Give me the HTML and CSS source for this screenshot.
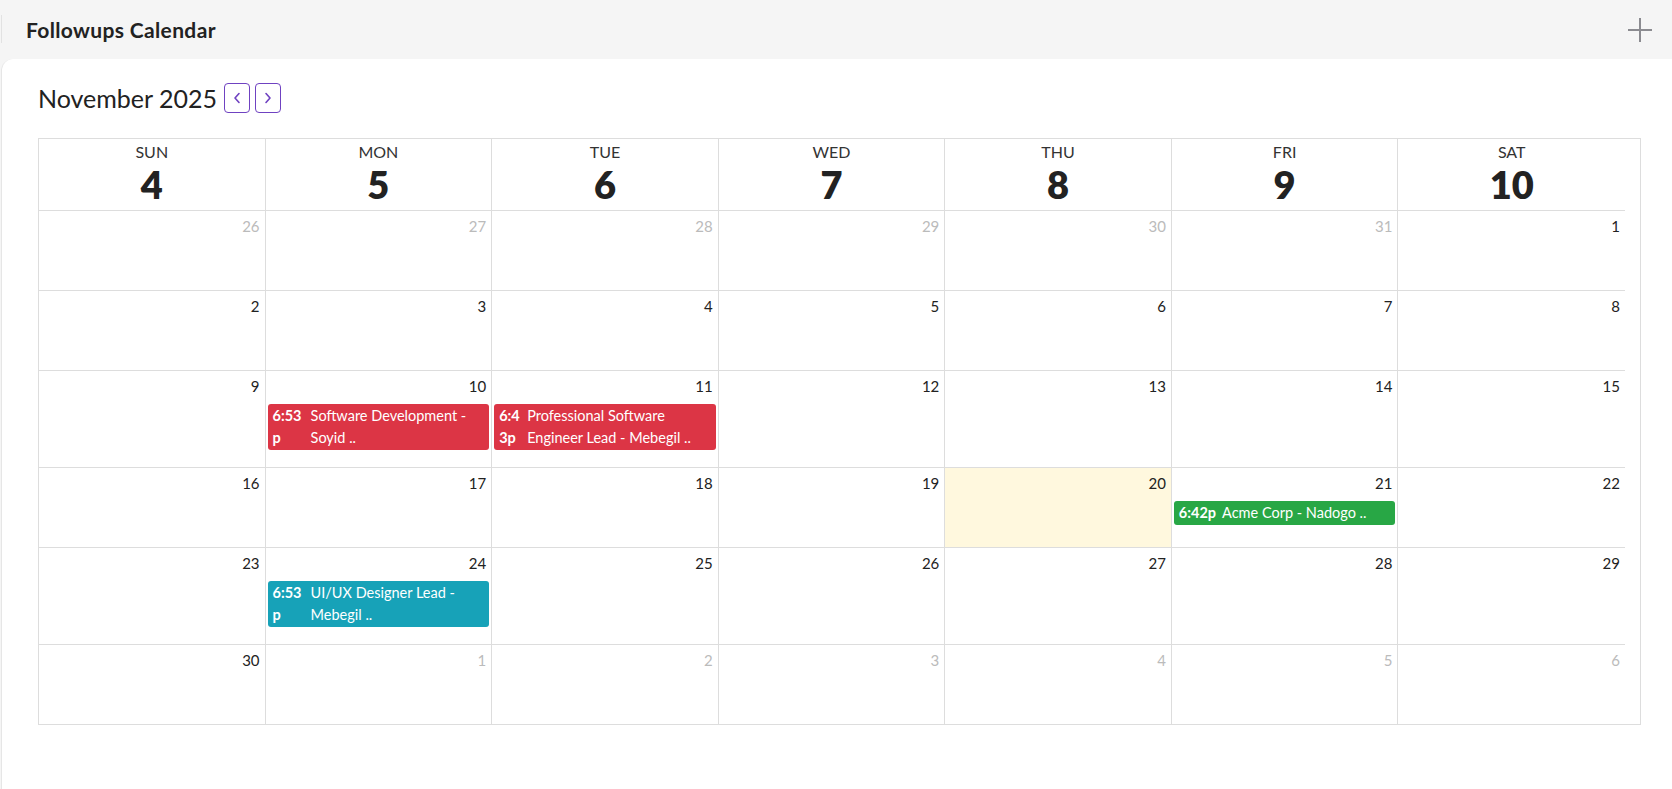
FILE: index.html
```html
<!DOCTYPE html>
<html lang="en">
<head>
<meta charset="utf-8">
<title>Followups Calendar</title>
<link rel="stylesheet" href="styles.css">
</head>
<body>
<div class="page">
  <header class="topbar">
    <span class="topbar-sep"></span>
    <h1 class="topbar-title">Followups Calendar</h1>
    <button class="add-btn" aria-label="Add">
      <svg width="24" height="24" viewBox="0 0 24 24"><path d="M12 0V24M0 12H24" stroke="#8b8b90" stroke-width="2" fill="none"/></svg>
    </button>
  </header>

  <main class="card">
    <div class="toolbar">
      <h2 class="month-title">November 2025</h2>
      <button class="nav-btn" aria-label="Previous">
        <svg width="8" height="12" viewBox="0 0 8 12"><path d="M6 1.5L2 6L6 10.5" stroke="#6f42c1" stroke-width="1.6" fill="none" stroke-linecap="round" stroke-linejoin="round"/></svg>
      </button>
      <button class="nav-btn" aria-label="Next">
        <svg width="8" height="12" viewBox="0 0 8 12"><path d="M2 1.5L6 6L2 10.5" stroke="#6f42c1" stroke-width="1.6" fill="none" stroke-linecap="round" stroke-linejoin="round"/></svg>
      </button>
    </div>

    <div class="cal">
      <div class="cal-inner">
        <div class="cal-head">
          <div class="head-cell"><span class="head-name">Sun</span><span class="head-num">4</span></div>
          <div class="head-cell"><span class="head-name">Mon</span><span class="head-num">5</span></div>
          <div class="head-cell"><span class="head-name">Tue</span><span class="head-num">6</span></div>
          <div class="head-cell"><span class="head-name">Wed</span><span class="head-num">7</span></div>
          <div class="head-cell"><span class="head-name">Thu</span><span class="head-num">8</span></div>
          <div class="head-cell"><span class="head-name">Fri</span><span class="head-num">9</span></div>
          <div class="head-cell"><span class="head-name">Sat</span><span class="head-num">10</span></div>
        </div>

        <div class="week">
          <div class="day other"><span class="num">26</span></div>
          <div class="day other"><span class="num">27</span></div>
          <div class="day other"><span class="num">28</span></div>
          <div class="day other"><span class="num">29</span></div>
          <div class="day other"><span class="num">30</span></div>
          <div class="day other"><span class="num">31</span></div>
          <div class="day"><span class="num">1</span></div>
        </div>

        <div class="week">
          <div class="day"><span class="num">2</span></div>
          <div class="day"><span class="num">3</span></div>
          <div class="day"><span class="num">4</span></div>
          <div class="day"><span class="num">5</span></div>
          <div class="day"><span class="num">6</span></div>
          <div class="day"><span class="num">7</span></div>
          <div class="day"><span class="num">8</span></div>
        </div>

        <div class="week">
          <div class="day"><span class="num">9</span></div>
          <div class="day"><span class="num">10</span>
            <div class="event ev-red"><span class="ev-time ev-time--w4">6:53p</span><span class="ev-title">Software Development - Soyid ..</span></div>
          </div>
          <div class="day"><span class="num">11</span>
            <div class="event ev-red"><span class="ev-time ev-time--w3">6:43p</span><span class="ev-title">Professional Software Engineer Lead - Mebegil ..</span></div>
          </div>
          <div class="day"><span class="num">12</span></div>
          <div class="day"><span class="num">13</span></div>
          <div class="day"><span class="num">14</span></div>
          <div class="day"><span class="num">15</span></div>
        </div>

        <div class="week">
          <div class="day"><span class="num">16</span></div>
          <div class="day"><span class="num">17</span></div>
          <div class="day"><span class="num">18</span></div>
          <div class="day"><span class="num">19</span></div>
          <div class="day today"><span class="num">20</span></div>
          <div class="day"><span class="num">21</span>
            <div class="event ev-green"><span class="ev-time">6:42p</span><span class="ev-title">Acme Corp - Nadogo ..</span></div>
          </div>
          <div class="day"><span class="num">22</span></div>
        </div>

        <div class="week">
          <div class="day"><span class="num">23</span></div>
          <div class="day"><span class="num">24</span>
            <div class="event ev-teal"><span class="ev-time ev-time--w4">6:53p</span><span class="ev-title">UI/UX Designer Lead - Mebegil ..</span></div>
          </div>
          <div class="day"><span class="num">25</span></div>
          <div class="day"><span class="num">26</span></div>
          <div class="day"><span class="num">27</span></div>
          <div class="day"><span class="num">28</span></div>
          <div class="day"><span class="num">29</span></div>
        </div>

        <div class="week">
          <div class="day"><span class="num">30</span></div>
          <div class="day other"><span class="num">1</span></div>
          <div class="day other"><span class="num">2</span></div>
          <div class="day other"><span class="num">3</span></div>
          <div class="day other"><span class="num">4</span></div>
          <div class="day other"><span class="num">5</span></div>
          <div class="day other"><span class="num">6</span></div>
        </div>
      </div>
    </div>
  </main>
</div>
</body>
</html>
```

FILE: styles.css
```css
* { box-sizing: border-box; }

html, body {
  margin: 0;
  padding: 0;
  height: 100%;
}

body {
  font-family: Lato, "Open Sans", "Liberation Sans", sans-serif;
  color: #222;
  background: #f5f5f5;
}

.page {
  display: flex;
  flex-direction: column;
  height: 100%;
}

.topbar {
  position: relative;
  height: 59px;
  flex: none;
  display: flex;
  align-items: center;
  justify-content: space-between;
  padding: 0 20px 0 26px;
  background: #f5f5f5;
}

.topbar-sep {
  position: absolute;
  left: 1px;
  top: 15px;
  width: 1px;
  height: 28px;
  background: #e2e2e2;
}

.topbar-title {
  margin: 0;
  font-size: 21px;
  font-weight: 700;
  color: #222;
  letter-spacing: 0.35px;
}

.add-btn {
  border: 0;
  padding: 0;
  background: none;
  width: 24px;
  height: 24px;
  display: flex;
}

.card {
  flex: 1;
  margin-left: 1px;
  background: #fff;
  border-left: 1px solid #e6e6e6;
  border-top-left-radius: 12px;
  padding: 24px 31px 0 36px;
}

.toolbar {
  display: flex;
  align-items: center;
  height: 30px;
  margin-bottom: 25px;
}

.month-title {
  margin: 0 7px 0 0;
  font-size: 25px;
  font-weight: 400;
  color: #222;
}

.nav-btn {
  width: 26px;
  height: 30px;
  padding: 0;
  margin-right: 5px;
  border: 1px solid #6f42c1;
  border-radius: 4px;
  background: #fff;
  display: flex;
  align-items: center;
  justify-content: center;
}

.cal {
  border: 1px solid #ddd;
}

.cal-inner {
  margin-right: 15px;
}

.cal-head,
.week {
  display: grid;
  grid-template-columns: repeat(7, 1fr);
  border-bottom: 1px solid #ddd;
}

.week:last-child {
  border-bottom: 0;
}

.head-cell {
  display: flex;
  flex-direction: column;
  align-items: center;
  padding: 3px 0 4px;
  border-right: 1px solid #ddd;
}

.head-cell:last-child,
.day:last-child {
  border-right: 0;
}

.head-name {
  font-size: 16px;
  line-height: 20px;
  text-transform: uppercase;
  color: #333;
}

.head-num {
  font-size: 38px;
  line-height: 44px;
  font-weight: 800;
  color: #222;
}

.day {
  min-height: 79px;
  border-right: 1px solid #ddd;
  padding: 5px 2px 17px 2px;
  display: flex;
  flex-direction: column;
}

.day.today {
  background: #fff8de;
}

.num {
  align-self: flex-end;
  padding-right: 3px;
  font-size: 15px;
  line-height: 20px;
  color: #222;
}

.day.other .num {
  color: #bbb;
}

.event {
  margin-top: 8px;
  display: flex;
  padding: 1px 4px 1px 5px;
  border-radius: 3px;
  color: #fff;
  font-size: 14.5px;
  line-height: 22px;
}

.ev-red { background: #dc3545; }
.ev-green { background: #28a745; }
.ev-teal { background: #17a2b8; }

.ev-time {
  flex: none;
  font-weight: 700;
  margin-right: 6px;
  word-break: break-all;
}

.ev-time--w4 { width: 32px; }
.ev-time--w3 { width: 22px; }

.ev-title {
  flex: 1;
  min-width: 0;
}
```
